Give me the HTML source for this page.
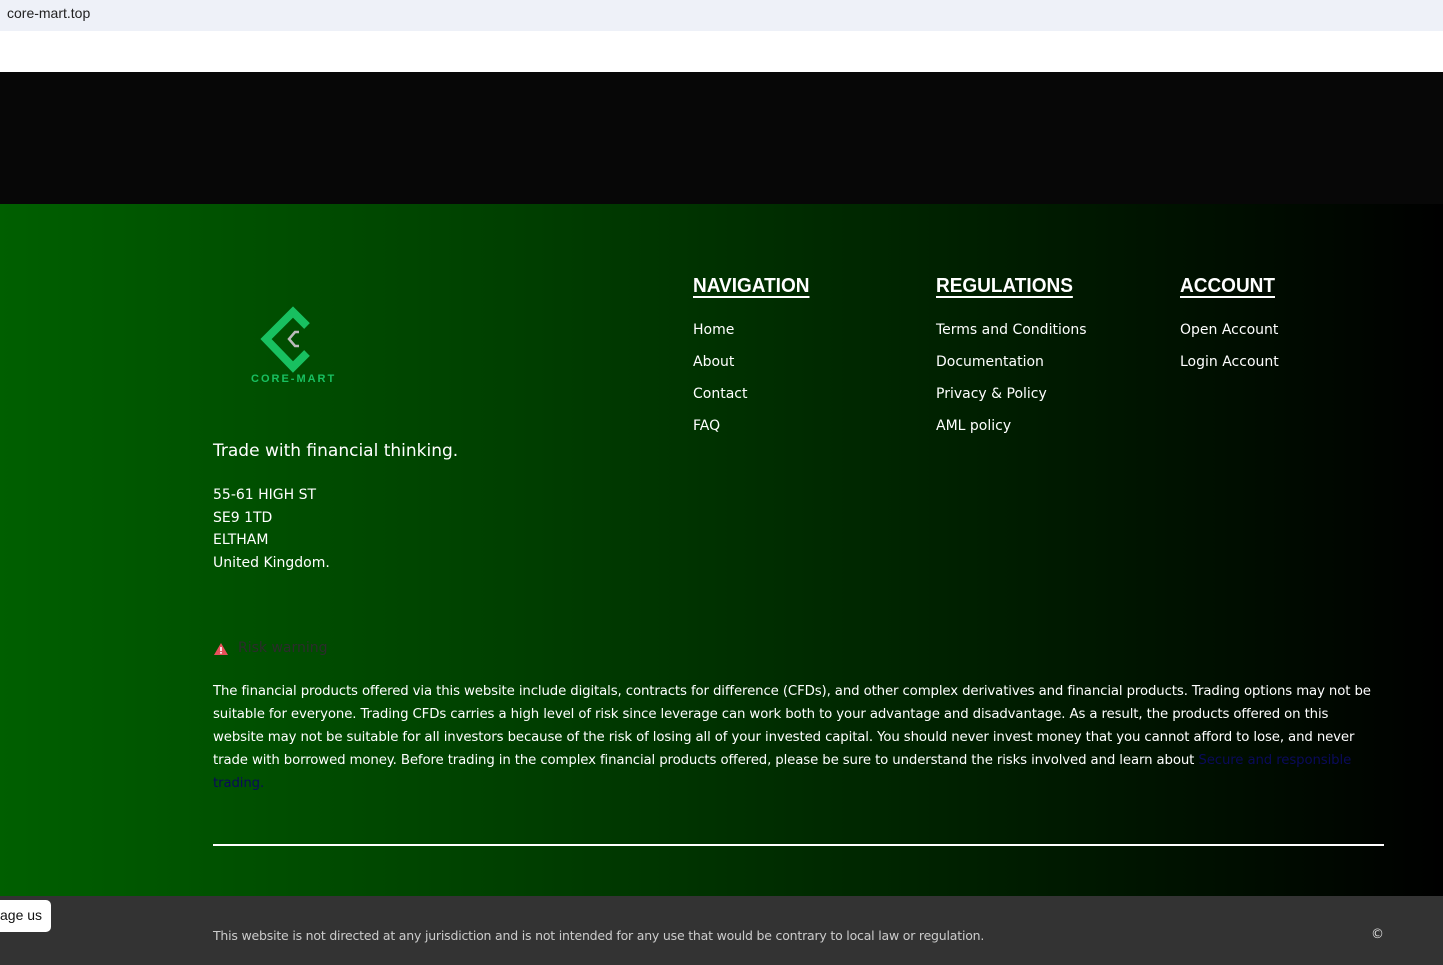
<!DOCTYPE html>
<html><head><meta charset="utf-8"><style>
*{margin:0;padding:0;box-sizing:border-box}
body{width:1443px;height:965px;overflow:hidden;font-family:"DejaVu Sans","Liberation Sans",sans-serif;background:#fff;position:relative}
.url{position:absolute;left:0;top:0;width:1443px;height:31px;background:#eef1f8;font-size:14px;color:#222;padding:5px 7px;font-family:"Liberation Sans",sans-serif}
.dark{position:absolute;left:0;top:72px;width:1443px;height:132px;background:#070707}
.foot{position:absolute;left:0;top:204px;width:1443px;height:692px;background:linear-gradient(90deg,#005f00 0%,#004000 35%,#002200 65%,#000 100%);color:#fff}
.bar{position:absolute;left:0;top:896px;width:1443px;height:69px;background:#333}
h3{position:absolute;font-size:20px;font-weight:bold;text-decoration:underline;text-underline-offset:4px;text-decoration-thickness:2px;font-family:"Liberation Sans",sans-serif;transform:scaleX(0.95);transform-origin:left}
.col{position:absolute;font-size:14px;line-height:32px}
.t{position:absolute;font-size:17px}
.addr{position:absolute;left:213px;top:280px;font-size:14px;line-height:22.5px}
.risk{position:absolute;left:213px;top:476px;width:1170px;font-size:13.3px;line-height:23px;letter-spacing:-0.12px}
</style></head><body>
<div class="url">core-mart.top</div>
<div class="dark"></div>
<div class="foot">
<svg style="position:absolute;left:250px;top:100px" width="90" height="82" viewBox="0 0 90 82">
<polyline points="57,22 43,8 16,35 43,63 57,49" fill="none" stroke="#18c060" stroke-width="8" stroke-linejoin="miter"/>
<polyline points="49,28 45,28 39,35 45,42 49,42" fill="none" stroke="#bbb" stroke-width="2.5"/>
<text x="1" y="78" font-family="Liberation Sans,sans-serif" font-weight="bold" font-size="11" letter-spacing="2" fill="#18c060">CORE-MART</text>
</svg>
<div class="t" style="left:213px;top:237px">Trade with financial thinking.</div>
<div class="addr">55-61 HIGH ST<br>SE9 1TD<br>ELTHAM<br>United Kingdom.</div>
<h3 style="left:693px;top:71px">NAVIGATION</h3>
<h3 style="left:936px;top:71px">REGULATIONS</h3>
<h3 style="left:1180px;top:71px">ACCOUNT</h3>
<div class="col" style="left:693px;top:110px">Home<br>About<br>Contact<br>FAQ</div>
<div class="col" style="left:936px;top:110px">Terms and Conditions<br>Documentation<br>Privacy &amp; Policy<br>AML policy</div>
<div class="col" style="left:1180px;top:110px">Open Account<br>Login Account</div>
<svg style="position:absolute;left:213px;top:438px" width="16" height="14" viewBox="0 0 16 14"><polygon points="8,1 15,13 1,13" fill="#e8505b"/><rect x="7.2" y="5" width="1.6" height="4" fill="#fff"/><rect x="7.2" y="10" width="1.6" height="1.6" fill="#fff"/></svg>
<div style="position:absolute;left:238px;top:436px;font-size:14px;color:#2c2c2c">Risk warning</div>
<div class="risk">The financial products offered via this website include digitals, contracts for difference (CFDs), and other complex derivatives and financial products. Trading options may not be<br>suitable for everyone. Trading CFDs carries a high level of risk since leverage can work both to your advantage and disadvantage. As a result, the products offered on this<br>website may not be suitable for all investors because of the risk of losing all of your invested capital. You should never invest money that you cannot afford to lose, and never<br>trade with borrowed money. Before trading in the complex financial products offered, please be sure to understand the risks involved and learn about <span style="color:#0a0a5a">Secure and responsible trading.</span></div>
<div style="position:absolute;left:213px;top:640px;width:1171px;height:2px;background:#fff"></div>
</div>
<div class="bar">
<div style="position:absolute;left:-10px;top:4px;width:61px;height:32px;background:#fff;border-radius:0 5px 5px 0;font-size:14px;color:#111;padding:7px 0 0 10px;font-family:'Liberation Sans',sans-serif">age us</div>
<div style="position:absolute;left:213px;top:32px;font-size:12.5px;color:#ccc;letter-spacing:-0.2px">This website is not directed at any jurisdiction and is not intended for any use that would be contrary to local law or regulation.</div>
<div style="position:absolute;left:1371px;top:31px;font-size:13px;color:#ddd">©</div>
</div>
</body></html>
